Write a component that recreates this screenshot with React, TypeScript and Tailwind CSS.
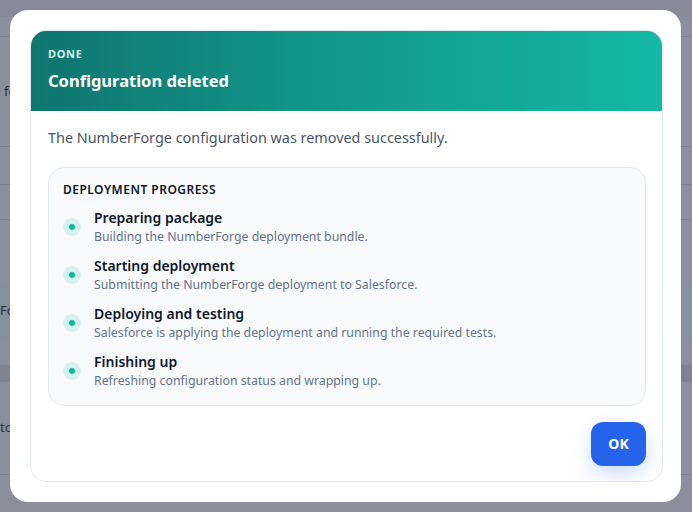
import React from "react";

const steps = [
  { title: "Preparing package", desc: "Building the NumberForge deployment bundle." },
  { title: "Starting deployment", desc: "Submitting the NumberForge deployment to Salesforce." },
  { title: "Deploying and testing", desc: "Salesforce is applying the deployment and running the required tests." },
  { title: "Finishing up", desc: "Refreshing configuration status and wrapping up." },
];

function Backdrop() {
  // faint page rows visible behind the overlay
  return (
    <div className="absolute inset-0 bg-[#8c8e9b] text-[13px] text-[#2b2f3d]">
      <div className="h-[17px] bg-[#878a99]" />
      <div className="h-[20px] border-b border-[#7f8291]" />
      <div className="flex h-[110px] items-center border-b border-[#7c7f8d] pl-1">fo</div>
      <div className="h-[38px] border-b border-[#7c7f8d]" />
      <div className="h-[35px] border-b border-[#7c7f8d]" />
      <div className="h-[65px]" />
      <div className="flex h-[53px] items-center border-b border-[#4fa89a] bg-[#84919a] pl-0">Fo</div>
      <div className="h-[27px]" />
      <div className="h-[17px] bg-[#80828f]" />
      <div className="flex h-[93px] items-center border-b border-[#7c7f8d] pl-0">to</div>
    </div>
  );
}

export default function App() {
  return (
    <div
      className="relative h-[512px] w-[692px] overflow-hidden"
      style={{ fontFamily: '"Noto Sans", "Open Sans", sans-serif' }}
    >
      <Backdrop />
      <div className="absolute left-[10px] top-[10px] h-[492px] w-[671px] rounded-[18px] bg-white p-[20px] pr-[18px]">
        <div className="flex h-full flex-col overflow-hidden rounded-[16px] border border-[#e2e8f0]">
          <div className="h-[80px] bg-gradient-to-r from-[#0f766e] via-[#129a8c] to-[#14b8a6] px-[17px] pt-[15px]">
            <div className="text-[11px] font-bold tracking-[0.06em] text-[#d5f1ec]">DONE</div>
            <div className="mt-[6px] text-[16.5px] font-bold text-white">Configuration deleted</div>
          </div>
          <div className="flex flex-1 flex-col pl-[17px] pr-[16px] pt-[16px]">
            <p className="text-[14.4px] text-[#4b5563]">The NumberForge configuration was removed successfully.</p>
            <div className="mt-[18px] rounded-[16px] border border-[#e2e8f0] bg-[#f8fafc] px-[14px] pb-[15px] pt-[14px]">
              <div className="text-[12px] font-semibold leading-[16px] tracking-[0.04em] text-[#111827]">
                DEPLOYMENT PROGRESS
              </div>
              <div className="mt-[10px] flex flex-col gap-[10px]">
                {steps.map((s) => (
                  <div key={s.title} className="flex items-center gap-[13px]">
                    <div className="flex h-[18px] w-[18px] shrink-0 items-center justify-center rounded-full bg-[#d5f3ee]">
                      <div className="h-[6px] w-[6px] rounded-full bg-[#14b8a6]" />
                    </div>
                    <div>
                      <div className="text-[14px] font-semibold leading-[20px] text-[#0f172a]">{s.title}</div>
                      <div className="text-[12.3px] leading-[18px] text-[#64748b]">{s.desc}</div>
                    </div>
                  </div>
                ))}
              </div>
            </div>
            <div className="mt-[16px] flex justify-end">
              <button className="h-[44px] w-[55px] rounded-[12px] bg-[#2563eb] text-[14px] font-bold text-white shadow-[0_8px_20px_rgba(37,99,235,0.22)]">
                OK
              </button>
            </div>
          </div>
        </div>
      </div>
    </div>
  );
}
